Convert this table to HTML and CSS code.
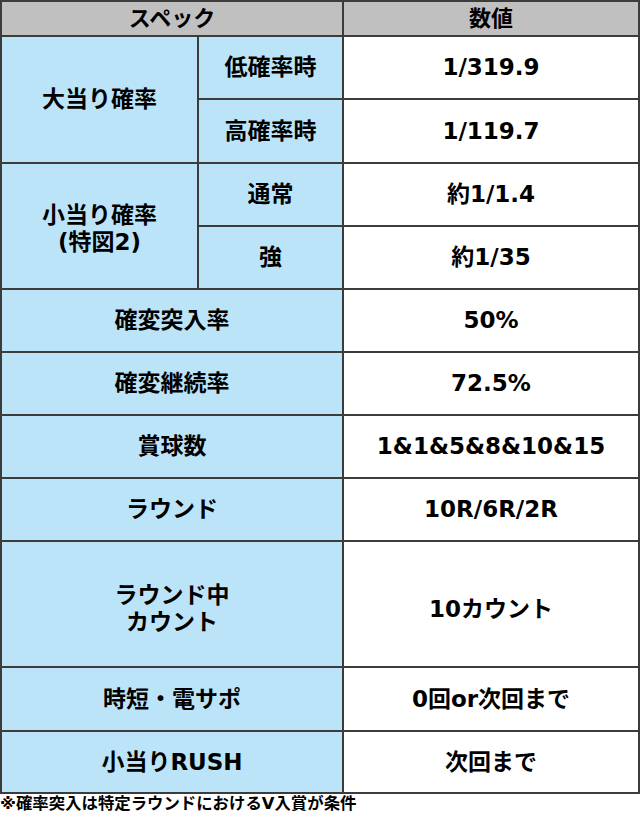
FILE: index.html
```html
<!DOCTYPE html>
<html lang="ja">
<head>
<meta charset="utf-8">
<title>スペック</title>
<link rel="stylesheet" href="styles.css">
</head>
<body>
<div class="spec">
  <div class="cell head span2">スペック</div>
  <div class="cell head">数値</div>

  <div class="cell label rows2">大当り確率</div>
  <div class="cell label">低確率時</div>
  <div class="cell value">1/319.9</div>
  <div class="cell label">高確率時</div>
  <div class="cell value">1/119.7</div>

  <div class="cell label rows2 low3">小当り確率<br>(特図2)</div>
  <div class="cell label">通常</div>
  <div class="cell value">約1/1.4</div>
  <div class="cell label">強</div>
  <div class="cell value">約1/35</div>

  <div class="cell label span2">確変突入率</div>
  <div class="cell value">50%</div>
  <div class="cell label span2">確変継続率</div>
  <div class="cell value">72.5%</div>
  <div class="cell label span2">賞球数</div>
  <div class="cell value">1&amp;1&amp;5&amp;8&amp;10&amp;15</div>
  <div class="cell label span2">ラウンド</div>
  <div class="cell value">10R/6R/2R</div>
  <div class="cell label span2 low5">ラウンド中<br>カウント</div>
  <div class="cell value low5">10カウント</div>
  <div class="cell label span2">時短・電サポ</div>
  <div class="cell value">0回or次回まで</div>
  <div class="cell label span2">小当りRUSH</div>
  <div class="cell value">次回まで</div>
</div>
<p class="note">※確率突入は特定ラウンドにおけるV入賞が条件</p>
</body>
</html>
```
FILE: styles.css
```css
html, body {
  margin: 0;
  padding: 0;
  background: #ffffff;
}
body {
  width: 640px;
  font-family: "DejaVu Sans", "Noto Sans CJK JP", sans-serif;
  font-weight: bold;
  color: #000;
}
.spec {
  display: grid;
  grid-template-columns: 195px 143px 294px;
  grid-template-rows: 33px 61px 62px 61px 61px 61px 61px 61px 61px 124px 62px 60px;
  gap: 2px;
  padding: 2px;
  background: #3c3c3c;
  width: 636px;
}
.cell {
  display: flex;
  align-items: center;
  justify-content: center;
  text-align: center;
  font-size: 23px;
  line-height: 27px;
}
.head {
  background: #c0c0c0;
  font-size: 22px;
}
.label {
  background: #bce4f8;
}
.value {
  background: #ffffff;
}
.span2 {
  grid-column: span 2;
}
.rows2 {
  grid-row: span 2;
}
.low3 {
  padding-top: 6px;
}
.low5 {
  padding-top: 10px;
}
.note {
  margin: 0;
  padding-top: 1px;
  font-size: 16.4px;
  line-height: 18px;
  white-space: nowrap;
}
```
